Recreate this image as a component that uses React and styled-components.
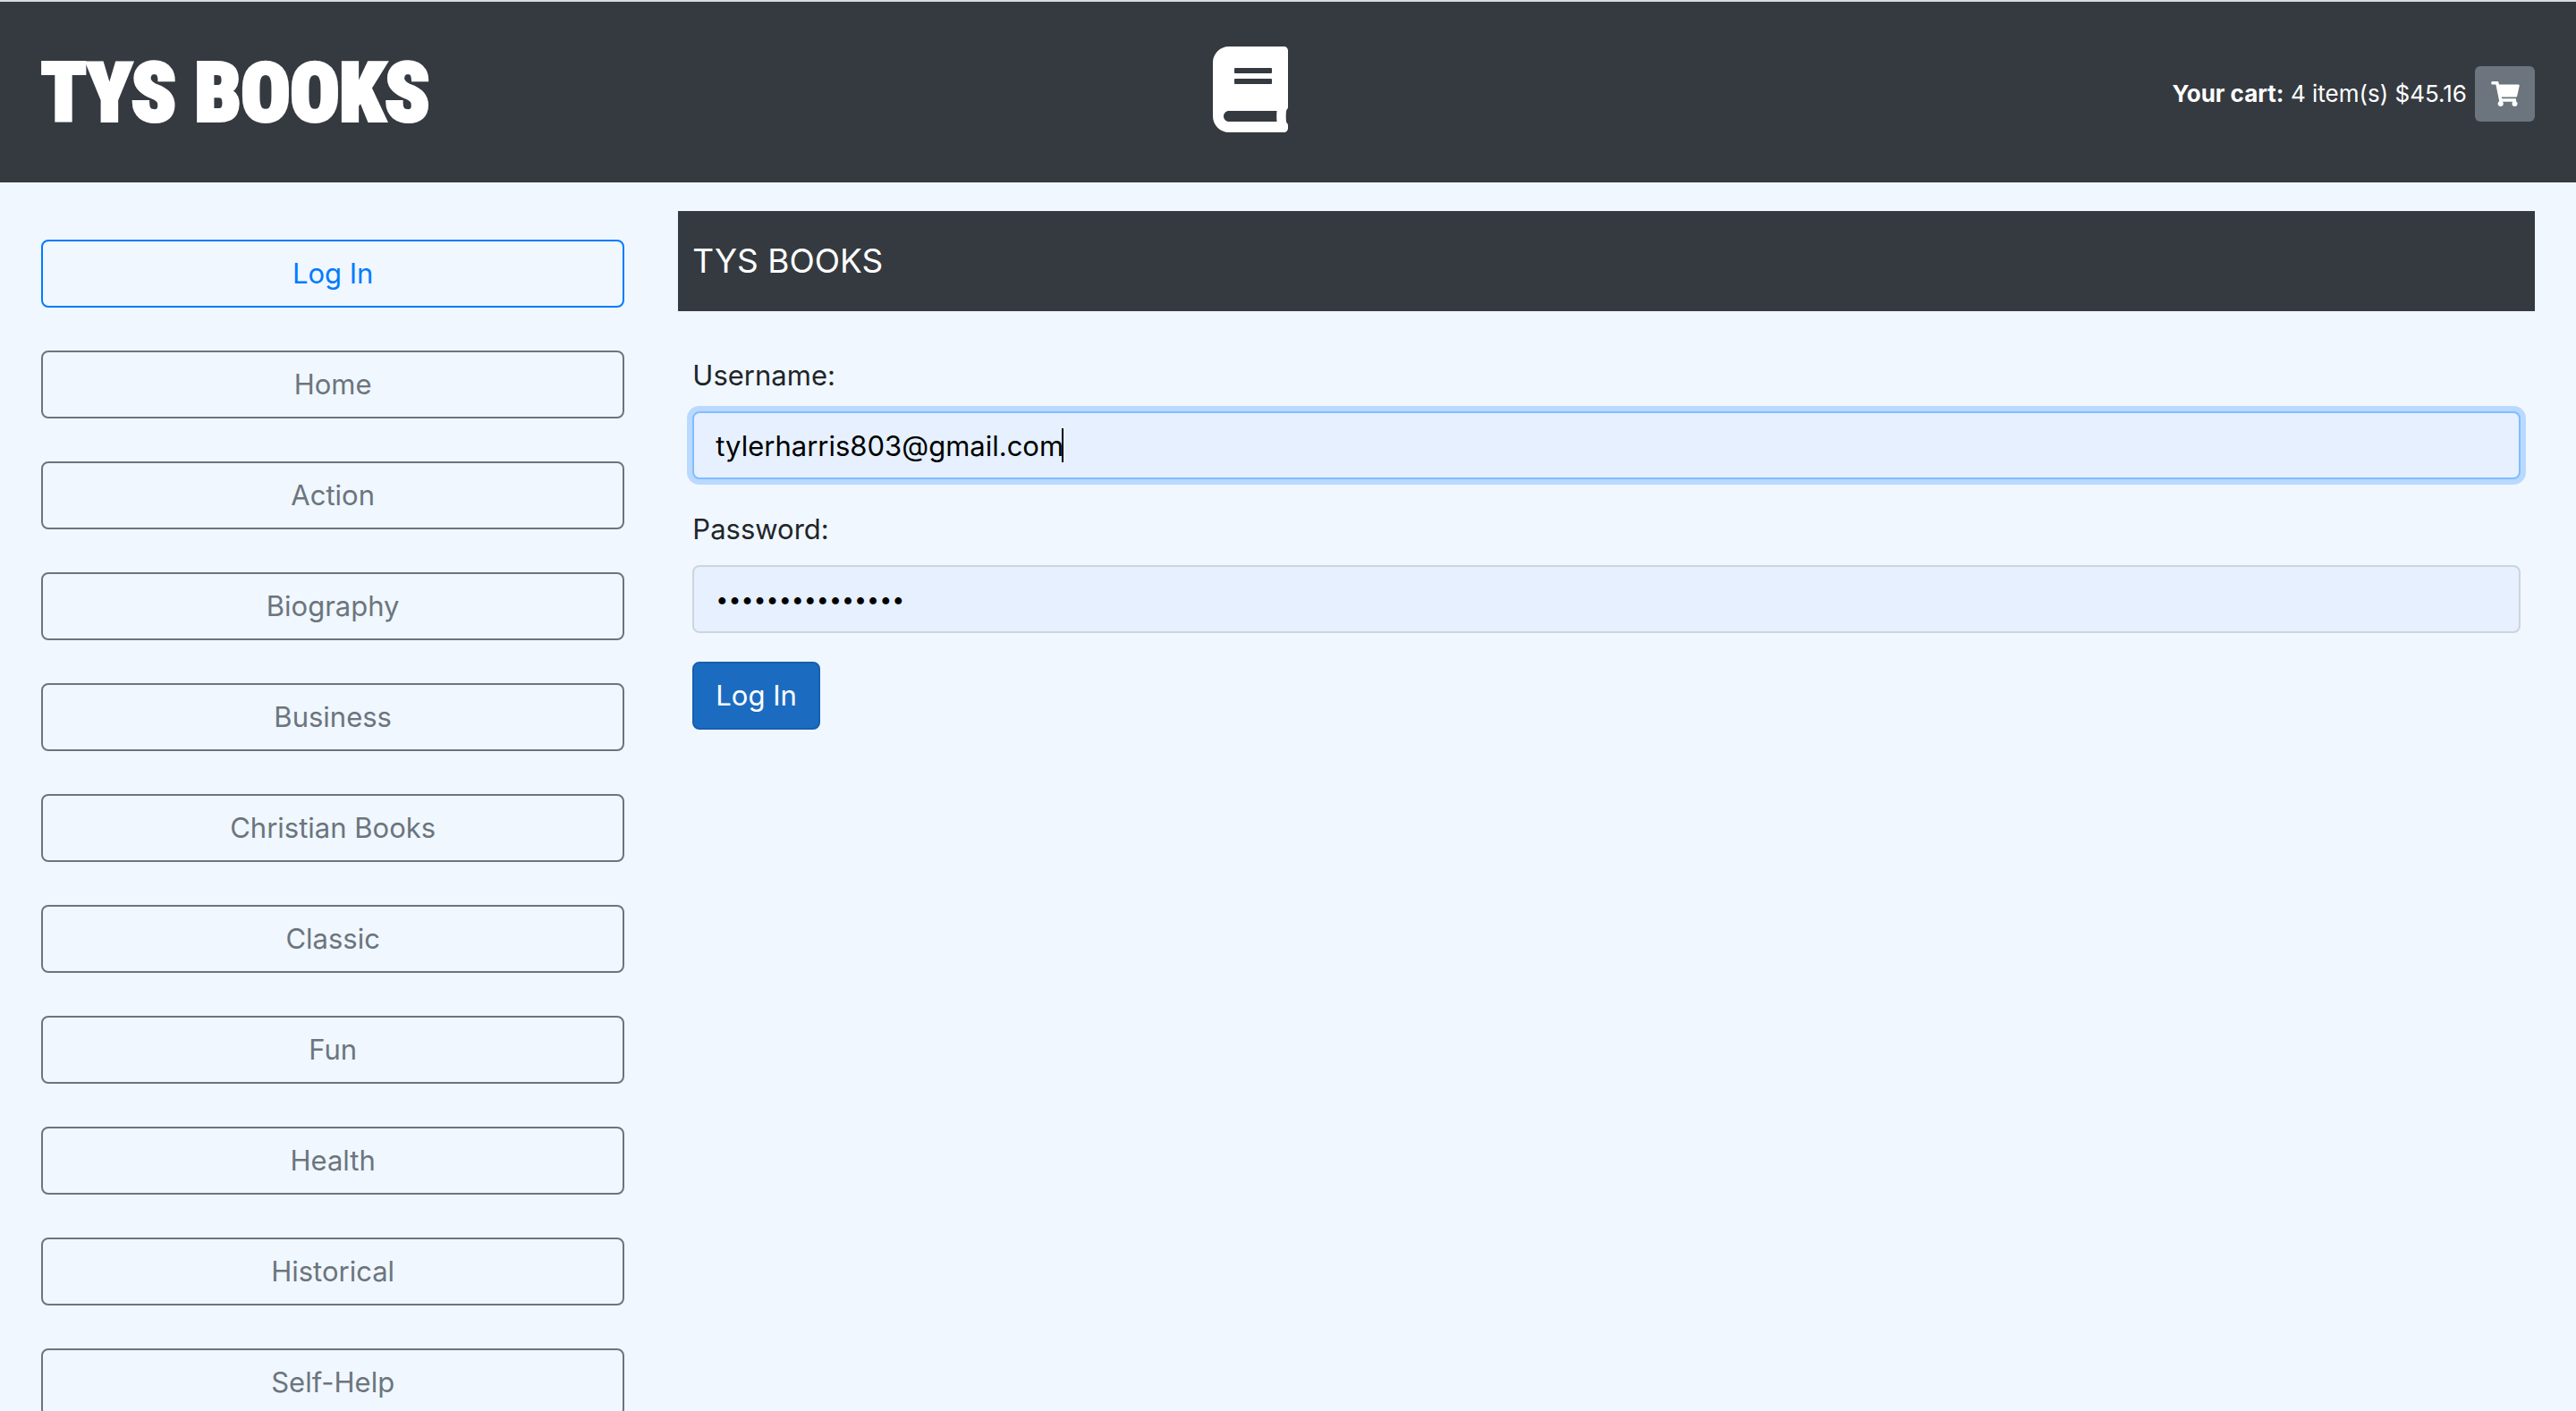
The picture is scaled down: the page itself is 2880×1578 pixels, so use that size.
import React from "react";
import styled, { createGlobalStyle } from "styled-components";
import { FaBook, FaShoppingCart } from "react-icons/fa";

const GlobalStyle = createGlobalStyle`
  *, *::before, *::after { box-sizing: border-box; }
  html { background: #f0f7ff; }
  body {
    margin: 0;
    background: #f0f7ff;
    color: #212529;
    font-family: Inter, "Liberation Sans", sans-serif;
    font-size: 31px;
    line-height: 48px;
  }
`;

const Page = styled.div`
  height: 100vh;
  overflow: hidden;
`;

const Header = styled.header`
  display: grid;
  grid-template-columns: 1fr 1fr;
  padding: 48px 46px;
  border-top: 2px solid #d8dade;
  background: #353a40;
  color: #fff;
`;

const Brand = styled.div`
  display: flex;
  align-items: flex-start;
  justify-content: space-between;
  padding-top: 2px;
`;

const Logo = styled.h1`
  margin: 0;
  font-family: Impact, "Roboto Condensed", Roboto, sans-serif;
  font-size: 91px;
  font-weight: 900;
  line-height: 104px;
  white-space: nowrap;
  -webkit-text-stroke: 4px #fff;
`;

const BookIcon = styled(FaBook)`
  width: 84px;
  height: 96px;
`;

const Cart = styled.div`
  display: flex;
  align-items: center;
  justify-content: flex-end;
  gap: 9px;
  padding-top: 4px;
  font-size: 26px;
  line-height: 40px;
`;

const CartButton = styled.button`
  display: flex;
  align-items: center;
  justify-content: center;
  width: 67px;
  height: 62px;
  padding: 0;
  border: 0;
  border-radius: 6px;
  background: #6c757d;
  color: #fff;
`;

const CartIcon = styled(FaShoppingCart)`
  width: 32px;
  height: 28px;
`;

const Content = styled.div`
  display: grid;
  grid-template-columns: 11fr 35fr;
  gap: 60px;
  align-items: start;
  padding: 32px 46px;
`;

const Nav = styled.nav`
  display: flex;
  flex-direction: column;
  gap: 48px;
  padding-top: 32px;
`;

const NavLink = styled.a`
  padding: 12px 24px;
  border: 2px solid currentColor;
  border-radius: 8px;
  color: ${({ $primary }) => ($primary ? "#007bff" : "#6c757d")};
  text-align: center;
  text-decoration: none;
`;

const Title = styled.h2`
  margin: 0;
  padding: 32px 16px;
  background: #353a40;
  color: #fff;
  font-size: 37px;
  font-weight: 400;
  line-height: 48px;
`;

const Form = styled.form`
  display: flex;
  flex-direction: column;
  align-items: flex-start;
  gap: 32px;
  padding: 48px 16px;
`;

const Field = styled.div`
  display: flex;
  flex-direction: column;
  gap: 16px;
  width: 100%;
`;

const InputWrap = styled.div`
  position: relative;
`;

const Input = styled.input`
  display: block;
  width: 100%;
  height: 76px;
  padding: 12px 24px;
  border: 2px solid #ced4da;
  border-radius: 8px;
  outline: 0;
  background: #e6f0ff;
  color: #000;
  font: inherit;
  caret-color: transparent;

  &[type="password"] {
    font-size: 25px;
  }

  &:focus {
    border-color: #80bdff;
    box-shadow: 0 0 0 6px #bad9ff;
  }
`;

const Caret = styled.span`
  position: absolute;
  top: 19px;
  left: 413px;
  width: 2px;
  height: 38px;
  background: #000;
`;

const Submit = styled.button`
  padding: 12px 24px;
  border: 2px solid #1760ad;
  border-radius: 8px;
  background: #1b6cc0;
  color: #fff;
  font: inherit;
`;

const categories = [
  "Home",
  "Action",
  "Biography",
  "Business",
  "Christian Books",
  "Classic",
  "Fun",
  "Health",
  "Historical",
  "Self-Help",
];

export default function App() {
  return (
    <Page>
      <GlobalStyle />
      <Header>
        <Brand>
          <Logo>TYS BOOKS</Logo>
          <BookIcon aria-hidden="true" />
        </Brand>
        <Cart>
          <span>
            <b>Your cart:</b> 4 item(s) $45.16
          </span>
          <CartButton type="button" aria-label="View cart">
            <CartIcon />
          </CartButton>
        </Cart>
      </Header>
      <Content>
        <Nav>
          <NavLink href="#login" $primary>
            Log In
          </NavLink>
          {categories.map((name) => (
            <NavLink key={name} href="#category">
              {name}
            </NavLink>
          ))}
        </Nav>
        <main>
          <Title>TYS BOOKS</Title>
          <Form onSubmit={(event) => event.preventDefault()}>
            <Field>
              <label htmlFor="username">Username:</label>
              <InputWrap>
                <Input id="username" type="text" defaultValue="tylerharris803@gmail.com" autoFocus />
                <Caret />
              </InputWrap>
            </Field>
            <Field>
              <label htmlFor="password">Password:</label>
              <Input id="password" type="password" defaultValue="abcdefghijklmno" />
            </Field>
            <Submit type="submit">Log In</Submit>
          </Form>
        </main>
      </Content>
    </Page>
  );
}
